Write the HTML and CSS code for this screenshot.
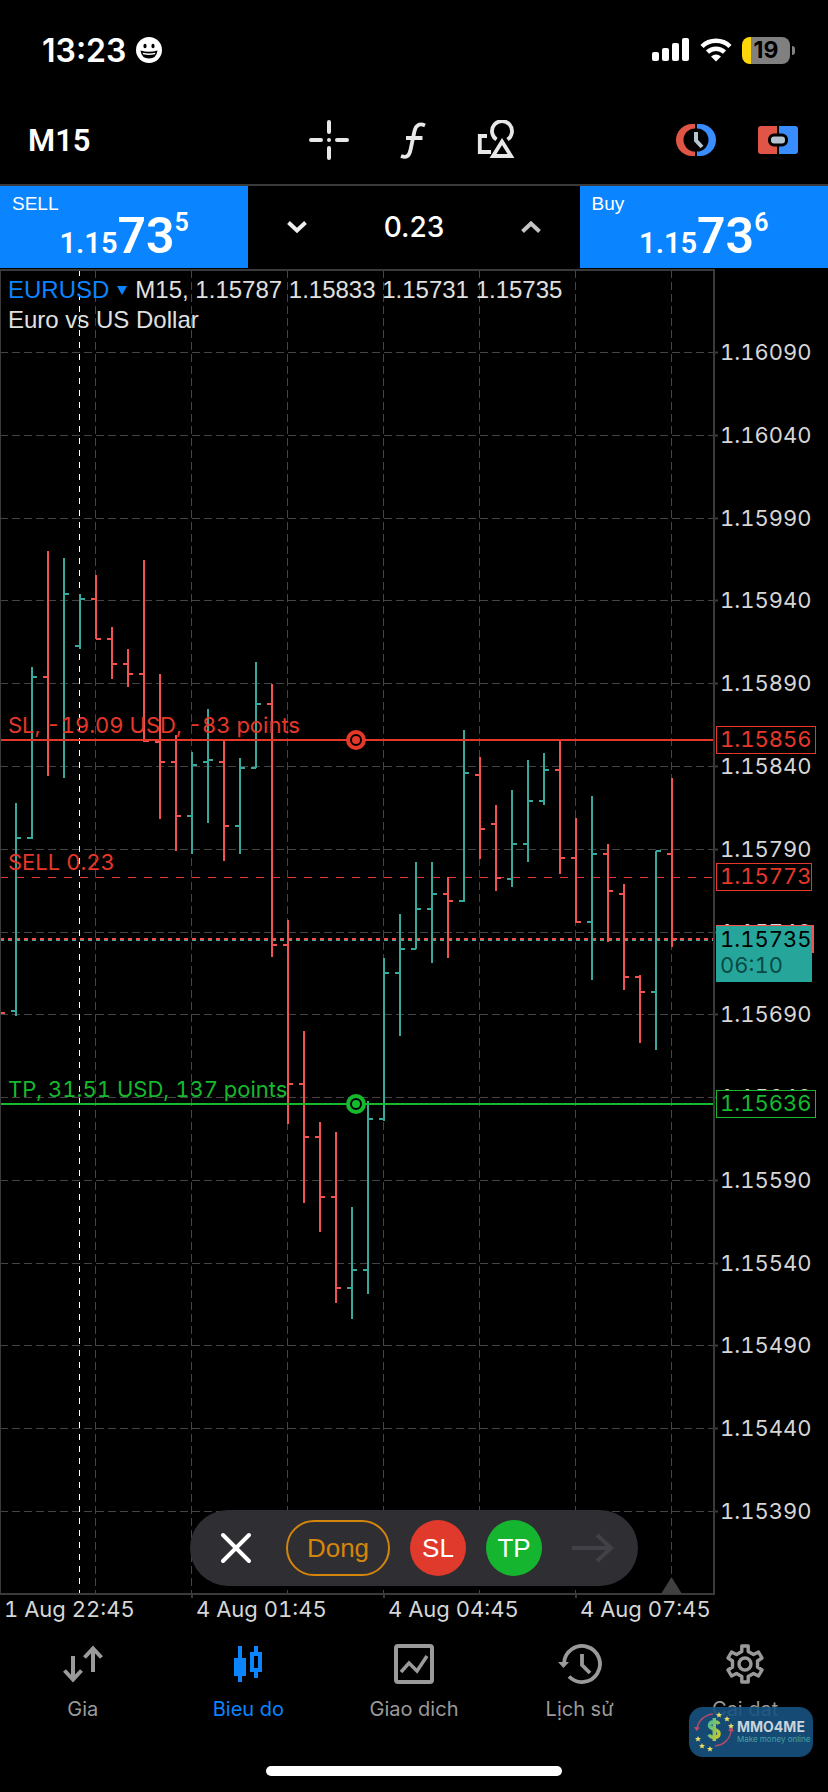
FILE: index.html
```
<!DOCTYPE html>
<html lang="vi">
<head>
    <meta charset="UTF-8">
    <meta name="viewport" content="width=device-width, initial-scale=1.0">
    <title>EURUSD, M15</title>
    <link rel="stylesheet" href="styles.css">
</head>
<body>
    <header class="status-bar">
        <div class="status-left">
            <span class="clock">13:23</span>
            <svg width="26" height="26" viewBox="0 0 26 26">
                <circle cx="13" cy="13" r="13" fill="#fff"/>
                <ellipse cx="9" cy="9" rx="1.6" ry="2.2"/>
                <ellipse cx="17" cy="9" rx="1.6" ry="2.2"/>
                <path d="M4.500 13.500Q13 16 21.500 13.500Q20.500 21.500 13 21.500T4.500 13.500Z"/>
                <path d="M6.500 15.800Q13 17.400 19.500 15.800L18.800 17.300Q13 18.600 7.200 17.300Z" fill="#fff"/>
            </svg>
        </div>
        <div class="status-right">
            <svg width="38" height="24" viewBox="0 0 38 24" fill="#fff">
                <rect x="0" y="14" width="7" height="9" rx="2"/>
                <rect x="10" y="10" width="7" height="13" rx="2"/>
                <rect x="20" y="5" width="7" height="18" rx="2"/>
                <rect x="30" y="0" width="7" height="23" rx="2"/>
            </svg>
            <svg width="32" height="24" viewBox="0 0 32 24" fill="none" stroke="#fff" stroke-width="4.500">
                <path d="M2 8.500A20 20 0 0 1 30 8.500"/>
                <path d="M7.500 14.200A12.500 12.500 0 0 1 24.500 14.200"/>
                <path d="M16 23.500L11 18.600Q16 14.500 21 18.600Z" fill="#fff" stroke="none"/>
            </svg>
            <div class="battery"><span class="battery-text">19</span></div>
        </div>
    </header>

    <div class="toolbar">
        <button class="timeframe" type="button">M15</button>
        <div class="tools">
            <button class="icon-button" type="button" aria-label="Crosshair">
                <svg width="40" height="40" viewBox="0 0 40 40" stroke="#e8e8e8" stroke-width="4" stroke-linecap="round">
                    <path d="M20 2V12M20 28V38M2 20H12M28 20H38M20 20V20"/>
                </svg>
            </button>
            <button class="icon-button" type="button" aria-label="Indicators">
                <svg width="40" height="40" viewBox="0 0 40 40" fill="none" stroke="#e8e8e8" stroke-width="3.800">
                    <path d="M32 5.500C26.500 3 22.800 5 21.500 11L17.500 30C16 36.500 13.500 38 8 36M13 18H29.500"/>
                </svg>
            </button>
            <button class="icon-button" type="button" aria-label="Objects">
                <svg width="40" height="40" viewBox="0 0 40 40" fill="none" stroke="#e8e8e8" stroke-width="3.800">
                    <path d="M19.500 19.500A10 10 0 1 1 30.500 19.500"/>
                    <path d="M25 21.500L34 36H16Z"/>
                    <path d="M10 16H2.800V32H14"/>
                </svg>
            </button>
        </div>
        <div class="modes">
            <button class="icon-button" type="button" aria-label="Pending order">
                <svg width="40" height="32" viewBox="0 0 40 32">
                    <path d="M19 0H16A16 16 0 0 0 16 32H19V27.500A11.500 11.500 0 0 1 19 4.500Z" fill="#e05545"/>
                    <path d="M21 0H24A16 16 0 0 1 24 32H21V27.500A11.500 11.500 0 0 0 21 4.500Z" fill="#3a8dff"/>
                    <path d="M20 8V16.500L26 23" fill="none" stroke="#b4c4d0" stroke-width="4"/>
                </svg>
            </button>
            <button class="icon-button" type="button" aria-label="One click trading">
                <svg width="40" height="28" viewBox="0 0 40 28">
                    <path d="M19 0H3Q0 0 0 3V25Q0 28 3 28H19Z" fill="#e05545"/>
                    <path d="M21 0H37Q40 0 40 3V25Q40 28 37 28H21Z" fill="#3a8dff"/>
                    <rect x="11.500" y="9" width="17" height="10" rx="4.500" fill="#b4c4d0" stroke="#000" stroke-width="3"/>
                </svg>
            </button>
        </div>
    </div>

    <div class="quotes">
        <button class="quote" type="button">
            <span class="quote-side">SELL</span>
            <span class="price"><span class="price-small">1.15</span><span class="price-big">73</span><span class="price-pip">5</span></span>
        </button>
        <div class="volume">
            <button class="icon-button" type="button" aria-label="Less">
                <svg width="20" height="12" viewBox="0 0 20 12" fill="none" stroke="#ededed" stroke-width="4"><path d="M1.500 1.500L10 9.500L18.500 1.500"/></svg>
            </button>
            <input class="volume-input" type="text" value="0.23" aria-label="Volume">
            <button class="icon-button" type="button" aria-label="More">
                <svg width="20" height="12" viewBox="0 0 20 12" fill="none" stroke="#c4c4c4" stroke-width="4"><path d="M1.500 10.500L10 2.500L18.500 10.500"/></svg>
            </button>
        </div>
        <button class="quote" type="button">
            <span class="quote-side">Buy</span>
            <span class="price"><span class="price-small">1.15</span><span class="price-big">73</span><span class="price-pip">6</span></span>
        </button>
    </div>

    <main class="chart-area">
        <svg class="chart" id="chart" viewBox="0 268 828 1360"></svg>
        <div class="chart-title">
            <div class="chart-line">
                <button class="symbol" type="button">EURUSD
                    <svg width="10" height="9" viewBox="0 0 10 9" fill="#0a84ff"><path d="M0 0H10L5 9Z"/></svg>
                </button>
                <span>M15, 1.15787 1.15833 1.15731 1.15735</span>
            </div>
            <div class="chart-line">Euro vs US Dollar</div>
        </div>
        <div class="trade-bar">
            <button class="icon-button" type="button" aria-label="Cancel">
                <svg width="32" height="32" viewBox="0 0 32 32" stroke="#fff" stroke-width="4" stroke-linecap="round"><path d="M3 3L29 29M29 3L3 29"/></svg>
            </button>
            <button class="close-button" type="button">Dong</button>
            <button class="round-button sl" type="button">SL</button>
            <button class="round-button tp" type="button">TP</button>
            <button class="icon-button" type="button" aria-label="Apply" disabled>
                <svg width="42" height="30" viewBox="0 0 42 30" fill="none" stroke="#424147" stroke-width="4"><path d="M0 15H39M25 2L39 15L25 28"/></svg>
            </button>
        </div>
    </main>

    <nav class="tab-bar">
        <a class="tab" href="#">
            <svg width="40" height="40" viewBox="0 0 40 40" fill="none" stroke="#9a9a9a" stroke-width="4"><path d="M10 12V35M1.500 26.500L10 35.500L18.500 26.500M30 28V5M21.500 13.500L30 4.500L38.500 13.500"/></svg>
            Gia
        </a>
        <a class="tab active" href="#">
            <svg width="40" height="40" viewBox="0 0 40 40" fill="#0a84ff"><path d="M10 2H14V14H18V32H14V38H10V32H6V14H10Z"/><path d="M26 2H30V8H34V28H30V34H26V28H22V8H26ZM26 12V24H30V12Z" fill-rule="evenodd"/></svg>
            Bieu do
        </a>
        <a class="tab" href="#">
            <svg width="40" height="40" viewBox="0 0 40 40" fill="none" stroke="#9a9a9a" stroke-width="4"><rect x="2" y="2" width="36" height="36" rx="2"/><path d="M7 28L15 19L23 27L33 12" stroke-width="3.500"/></svg>
            Giao dich
        </a>
        <a class="tab" href="#">
            <svg width="44" height="40" viewBox="0 0 44 40" fill="none" stroke="#9a9a9a" stroke-width="3.800"><path d="M6 19A18 18 0 1 1 11 32.500"/><path d="M24 10V21L32 29"/><path d="M0 18H11L5.500 24Z" fill="#9a9a9a" stroke="none"/></svg>
            Lịch sử
        </a>
        <a class="tab" href="#">
            <svg width="40" height="40" viewBox="0 0 40 40" fill="none" stroke="#9a9a9a" stroke-width="3.400" stroke-linejoin="round"><path d="M16.800 2H23.200V7.500L28.500 10.500L33.500 8L37 14L32.500 17V23L37 26L33.500 32L28.500 29.500L23.200 32.500V38H16.800V32.500L11.500 29.500L6.500 32L3 26L7.500 23V17L3 14L6.500 8L11.500 10.500L16.800 7.500Z"/><circle cx="20" cy="20" r="6"/></svg>
            Cai dat
        </a>
    </nav>
    <div class="home-indicator"></div>

    <div class="watermark">
        <svg class="watermark-logo" width="40" height="40" viewBox="0 0 40 40">
            <defs>
                <linearGradient id="coin" x1="0" y1="0" x2="1" y2="1">
                    <stop offset="0" stop-color="#3fb8a0"/>
                    <stop offset="1" stop-color="#d8cc20"/>
                </linearGradient>
            </defs>
            <path d="M19 2C10 3 4 9 3 17M21 34C30 33 36 27 37 19" fill="none" stroke="#b04a68" stroke-width="1.500"/>
            <path d="M0 15L2.500 19L6 15.500ZM34 19L37.500 15L40 19.500Z" fill="#c84a60"/>
            <path d="M25 12C23 8.500 15.500 9 15.500 13.500C15.500 18 25 16.500 25 21.500C25 26.500 16.500 26.500 15 22.500M20.300 6V29" fill="none" stroke="url(#coin)" stroke-width="3.500"/>
            <path id="star" d="M25 0L25.900 1.900L28 2.100L26.400 3.500L26.900 5.600L25 4.500L23.100 5.600L23.600 3.500L22 2.100L24.100 1.900Z" fill="#e8dc60"/>
            <use href="#star" x="8" y="4"/>
            <use href="#star" x="12" y="11"/>
            <use href="#star" x="-21" y="24"/>
            <use href="#star" x="-17" y="31"/>
            <use href="#star" x="-9" y="34"/>
        </svg>
        <div class="watermark-text">
            <strong class="watermark-name">MMO4ME</strong>
            <span class="watermark-tag">Make money online</span>
        </div>
    </div>

    <script src="chart.js"></script>
</body>
</html>
```
FILE: styles.css
```
* {
    box-sizing: border-box;
}
body {
    margin: 0;
    min-height: 100vh;
    display: flex;
    flex-direction: column;
    position: relative;
    background: #000;
    color: #fff;
    font-family: Inter, Roboto, sans-serif;
}
button {
    padding: 0;
    border: none;
    background: none;
    color: inherit;
    font: inherit;
    cursor: pointer;
}
svg {
    display: block;
}

/* status bar */
.status-bar {
    height: 100px;
    padding: 0 38px 0 42px;
    display: flex;
    justify-content: space-between;
    align-items: center;
}
.status-left, .status-right {
    display: flex;
    align-items: center;
    gap: 10px;
}
.clock {
    font-size: 32px;
    font-weight: 600;
}
.battery {
    width: 48px;
    height: 27px;
    border-radius: 8px;
    background: linear-gradient(90deg, #ffd60a 9px, #808080 9px);
    position: relative;
    text-align: center;
}
.battery::after {
    content: "";
    position: absolute;
    right: -5px;
    top: 9px;
    width: 3px;
    height: 9px;
    border-radius: 0 3px 3px 0;
    background: #808080;
}
.battery-text {
    font-size: 23px;
    line-height: 27px;
    font-weight: 700;
    color: #000;
}

/* toolbar */
.toolbar {
    height: 84px;
    padding: 0 30px 4px 28px;
    display: grid;
    grid-template-columns: 1fr auto 1fr;
    align-items: center;
}
.timeframe {
    justify-self: start;
    font-family: Roboto, sans-serif;
    font-size: 31px;
    font-weight: 600;
}
.tools, .modes {
    display: flex;
    align-items: center;
    gap: 44px;
}
.modes {
    justify-self: end;
    gap: 42px;
}

/* sell / volume / buy */
.quotes {
    height: 84px;
    border-top: 2px solid #3a3a3a;
    display: grid;
    grid-template-columns: 3fr 4fr 3fr;
}
.quote {
    background: #0a84ff;
    padding: 8px 12px 0;
    display: flex;
    flex-direction: column;
    text-align: left;
}
.quote-side {
    font-family: "Liberation Sans", Arial, sans-serif;
    font-size: 19px;
    line-height: 20px;
}
.price {
    align-self: center;
    display: flex;
    align-items: flex-end;
    margin-top: -4px;
    font-family: Roboto, sans-serif;
    font-weight: 600;
}
.price-small {
    font-size: 29px;
    line-height: 38px;
}
.price-big {
    font-size: 50px;
    line-height: 52px;
}
.price-pip {
    font-size: 25px;
    line-height: 25px;
    align-self: flex-start;
}
.volume {
    padding: 0 39px;
    display: flex;
    align-items: center;
    justify-content: space-between;
}
.volume-input {
    width: 120px;
    border: none;
    background: none;
    color: #fff;
    font: 500 28px Inter, sans-serif;
    text-align: center;
}

/* chart */
.chart-area {
    position: relative;
}
.chart {
    width: 100%;
    height: auto;
}
.axis-line {
    stroke: #3a3a3a;
    stroke-width: 2;
    fill: none;
}
.grid-line {
    stroke: #444;
    stroke-dasharray: 8 4;
}
.day-line {
    stroke: #fff;
    stroke-dasharray: 6 6;
}
.bar-up, .bar-down {
    fill: none;
    stroke-width: 2;
}
.bar-up {
    stroke: #3aa79b;
}
.bar-down {
    stroke: #f0524f;
}
.label {
    font-size: 22px;
    font-variant-numeric: tabular-nums;
    fill: #d6d6d6;
}
.sl-line, .tp-line {
    stroke-width: 2;
}
.sl-line, .order-line {
    stroke: #e5382a;
}
.tp-line {
    stroke: #16b92e;
}
.order-line {
    stroke-dasharray: 8 8;
}
.ask-line, .bid-line {
    stroke-width: 2;
    stroke-dasharray: 4 4;
}
.ask-line {
    stroke: #f0524f;
}
.bid-line {
    stroke: #3aa79b;
}
.sl-text {
    fill: #e5382a;
}
.tp-text {
    fill: #16b92e;
}
.sl-box {
    fill: #000;
    stroke: #e5382a;
}
.tp-box {
    fill: #000;
    stroke: #16b92e;
}
.ask-box {
    fill: #f0524f;
}
.bid-box {
    fill: #26a69a;
}
.bid-text {
    fill: #000;
}
.time-left {
    fill: #0a4a45;
}
.shift-mark {
    fill: #404040;
}
.chart-title {
    position: absolute;
    top: 7px;
    left: 8px;
    font-family: "Liberation Sans", Arial, sans-serif;
    font-size: 24px;
    line-height: 30px;
    color: #e0e0e0;
}
.chart-line, .symbol {
    display: flex;
    align-items: center;
    gap: 8px;
}
.symbol {
    color: #0a84ff;
}
.trade-bar {
    position: absolute;
    left: 0;
    right: 0;
    bottom: 42px;
    width: fit-content;
    height: 76px;
    margin: 0 auto;
    padding: 0 24px 0 30px;
    border-radius: 38px;
    background: #2f2e33;
    display: flex;
    align-items: center;
    gap: 20px;
    font-family: "Liberation Sans", Arial, sans-serif;
    font-size: 26px;
}
.close-button {
    width: 104px;
    height: 56px;
    margin-left: 14px;
    border: 2px solid #d4850c;
    border-radius: 28px;
    color: #d4850c;
}
.round-button {
    width: 56px;
    height: 56px;
    border-radius: 28px;
    color: #fff;
}
.round-button.sl {
    background: #df3a2b;
}
.round-button.tp {
    background: #16b530;
}
.round-button.tp + .icon-button {
    margin-left: 10px;
}

/* bottom tabs */
.tab-bar {
    padding-top: 16px;
    display: grid;
    grid-template-columns: repeat(5, 1fr);
}
.tab {
    display: flex;
    flex-direction: column;
    align-items: center;
    gap: 13px;
    font-size: 20px;
    line-height: 24px;
    color: #9a9a9a;
    text-decoration: none;
}
.tab.active {
    color: #0a84ff;
}
.home-indicator {
    width: 296px;
    height: 10px;
    margin: auto auto 16px;
    border-radius: 5px;
    background: #fff;
}

.watermark {
    position: absolute;
    right: 15px;
    bottom: 35px;
    width: 124px;
    height: 50px;
    padding: 0 5px;
    border-radius: 14px;
    background: rgba(22, 82, 128, 0.9);
    display: flex;
    align-items: center;
    gap: 3px;
}
.watermark-logo {
    flex-shrink: 0;
}
.watermark-text {
    display: flex;
    flex-direction: column;
}
.watermark-name {
    font-size: 14px;
    line-height: 14px;
    color: #c8d4dc;
}
.watermark-tag {
    font-size: 8px;
    line-height: 10px;
    color: #48a0a8;
    white-space: nowrap;
}
```
FILE: chart.js
```
// [high, low, open, close, up]
const bars = [
    [803, 1016, 1011, 838, 1], [667, 839, 838, 677, 1], [551, 776, 677, 740, 0], [558, 778, 740, 594, 1],
    [594, 649, 646, 599, 1], [575, 639, 599, 639, 0], [627, 679, 639, 664, 0], [649, 687, 664, 674, 0],
    [560, 742, 674, 741, 0], [674, 819, 742, 762, 0], [735, 851, 762, 816, 0], [752, 854, 816, 765, 1],
    [709, 823, 762, 760, 1], [741, 861, 762, 826, 0], [758, 854, 826, 768, 1], [662, 768, 768, 704, 1],
    [684, 957, 704, 945, 0], [920, 1124, 945, 1084, 0], [1031, 1203, 1084, 1137, 0], [1122, 1232, 1137, 1197, 0],
    [1132, 1303, 1197, 1288, 0], [1207, 1319, 1288, 1270, 1], [1101, 1294, 1270, 1119, 1], [958, 1121, 1119, 973, 1],
    [914, 1036, 973, 949, 1], [862, 949, 949, 909, 1], [862, 963, 909, 894, 1], [877, 958, 894, 901, 0],
    [730, 902, 901, 773, 1], [757, 859, 775, 829, 0], [805, 891, 824, 878, 0], [790, 887, 879, 844, 1],
    [760, 862, 844, 801, 1], [753, 805, 801, 770, 1], [740, 874, 770, 858, 0], [818, 923, 858, 922, 0],
    [796, 980, 922, 854, 1], [844, 942, 854, 891, 0], [884, 990, 894, 977, 0], [975, 1043, 977, 992, 0],
    [851, 1050, 992, 851, 1], [778, 947, 854, 939, 0]
];
const times = ["1 Aug 22:45", "4 Aug 01:45", "4 Aug 04:45", "4 Aug 07:45"];

const line = (cls, x1, y1, x2, y2) => `<path class="${cls}" d="M${x1} ${y1}L${x2} ${y2}"/>`;
const text = (cls, x, y, str) => `<text class="label ${cls}" x="${x}" y="${y}">${str}</text>`;
const box = (cls, x, y, w, h) => `<rect class="${cls}" x="${x}" y="${y}" width="${w}" height="${h}"/>`;

let out = "";

// grid and price labels, one row every 50 points
for (let i = 0; i < 15; i++) {
    const y = Math.round(352 + i * 82.79) + 0.5;
    out += line("grid-line", 0, y, 714, y);
    out += line("axis-line", 714, y, 718, y);
    out += text("", 720, y + 7.5, ((116090 - i * 50) / 100000).toFixed(5));
}
for (let x = 95.5; x < 714; x += 96) {
    out += line("grid-line", x, 270, x, 1594);
}
out += line("day-line", 79.5, 270, 79.5, 1594);
times.forEach((t, i) => {
    out += text("", 4 + i * 192, 1617, t);
    if (i > 0) out += line("axis-line", i * 192, 1594, i * 192, 1598);
});

out += line("bid-line", 0, 940, 714, 940);
out += line("ask-line", 0, 939, 714, 939);
out += line("order-line", 0, 877.5, 714, 877.5);

// OHLC bars
out += line("bar-down", 0, 1013, 5, 1013);
bars.forEach(([high, low, open, close, up], i) => {
    const x = 16 + i * 16;
    out += `<path class="${up ? "bar-up" : "bar-down"}" d="M${x} ${high}V${low}M${x - 5} ${open}H${x}M${x} ${close}H${x + 5}"/>`;
});

// stop loss and take profit
[["sl", 740, "#e5382a"], ["tp", 1104, "#16b92e"]].forEach(([cls, y, color]) => {
    out += line(cls + "-line", 0, y, 714, y);
    out += `<circle cx="356" cy="${y}" r="8" fill="#000" stroke="${color}" stroke-width="4"/>`;
    out += `<circle cx="356" cy="${y}" r="4" fill="${color}"/>`;
});
out += text("sl-text", 8, 733, "SL, -19.09 USD, -83 points");
out += text("sl-text", 8, 870, "SELL 0.23");
out += text("tp-text", 8, 1097, "TP, 31.51 USD, 137 points");

out += box("sl-box", 716.5, 726.5, 99, 27) + text("sl-text", 720, 747, "1.15856");
out += box("sl-box", 716.5, 863.5, 95, 27) + text("sl-text", 720, 884, "1.15773");
out += box("ask-box", 716, 925, 98, 28);
out += box("bid-box", 716, 926, 96, 56) + text("bid-text", 720, 947, "1.15735") + text("time-left", 720, 973, "06:10");
out += box("tp-box", 716.5, 1090.5, 99, 27) + text("tp-text", 720, 1111, "1.15636");

// plot frame
out += `<path class="axis-line" d="M0 270H714V1594H0"/>` + line("axis-line", 0, 270, 0, 1594);
out += `<path class="shift-mark" d="M671.5 1577L682 1594H661Z"/>`;

document.getElementById("chart").innerHTML = out;
```
